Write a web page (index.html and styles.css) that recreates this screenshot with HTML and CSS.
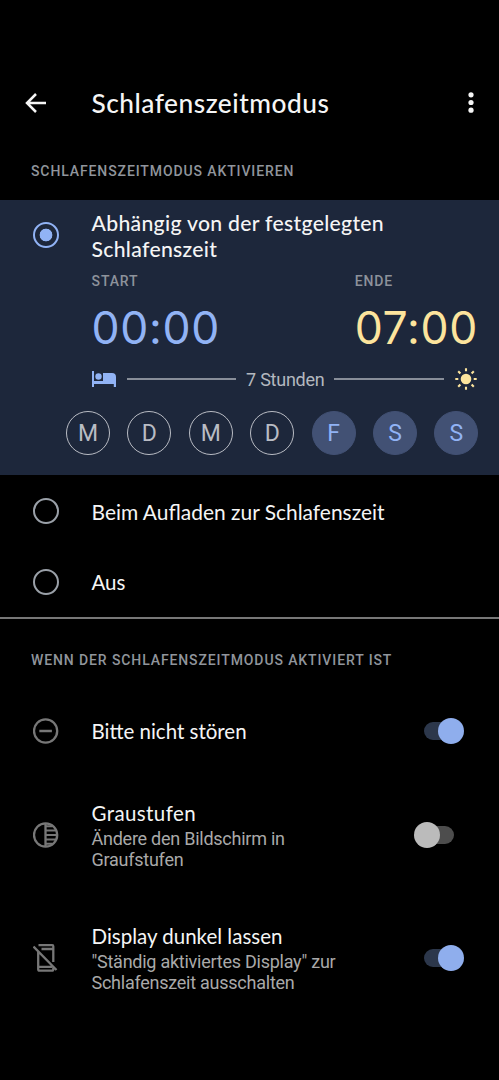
FILE: index.html
```html
<!DOCTYPE html>
<html lang="de">
<head>
<meta charset="utf-8">
<title>Schlafenszeitmodus</title>
<link rel="stylesheet" href="styles.css">
</head>
<body>
<header class="app-bar">
  <svg class="back" viewBox="0 0 22 20" width="22" height="20"><path d="M21 10H2.5M11 1L2 10l9 9" fill="none" stroke="currentColor" stroke-width="2.5"/></svg>
  <h1 class="app-title">Schlafenszeitmodus</h1>
  <svg class="more" viewBox="0 0 6 22" width="6" height="22" fill="currentColor"><circle cx="3" cy="2.800" r="2.600"/><circle cx="3" cy="10.500" r="2.600"/><circle cx="3" cy="18.200" r="2.600"/></svg>
</header>

<h2 class="section-label first">SCHLAFENSZEITMODUS AKTIVIEREN</h2>

<section class="schedule">
  <span class="radio checked"></span>
  <div class="schedule-body">
    <p class="label strong">Abhängig von der festgelegten<br>Schlafenszeit</p>
    <div class="times">
      <div><div class="caption">START</div><div class="time start">00:00</div></div>
      <div><div class="caption">ENDE</div><div class="time end">07:00</div></div>
    </div>
    <div class="duration">
      <svg class="bed" viewBox="0 0 24 16" width="24" height="16" fill="currentColor"><path d="M0 0h2v10h9V2h9a4 4 0 0 1 4 4v10h-2.200v-3H2v3H0z"/><circle cx="6.500" cy="5.500" r="3.200"/></svg>
      <span class="line"></span>
      <span class="hours">7 Stunden</span>
      <span class="line"></span>
      <svg class="sun" viewBox="-11 -11 22 22" width="22" height="22" stroke="currentColor" stroke-width="2.100"><circle r="5.300" fill="currentColor" stroke="none"/><path d="M0-10.700v3M0 10.700v-3M-10.700 0h3M10.700 0h-3M-7.800-7.800l2.200 2.200M7.800-7.800l-2.200 2.200M-7.800 7.800l2.200-2.200M7.800 7.800l-2.200-2.200"/></svg>
    </div>
  </div>
  <div class="days">
    <span class="day">M</span><span class="day">D</span><span class="day">M</span><span class="day">D</span><span class="day on">F</span><span class="day on">S</span><span class="day on">S</span>
  </div>
</section>

<div class="option"><span class="radio"></span><span class="label wide">Beim Aufladen zur Schlafenszeit</span></div>
<div class="option"><span class="radio"></span><span class="label">Aus</span></div>
<hr class="divider">

<h2 class="section-label second">WENN DER SCHLAFENSZEITMODUS AKTIVIERT IST</h2>

<div class="setting dnd">
  <svg class="icon" viewBox="0 0 26 26" width="26" height="26" fill="none" stroke="currentColor" stroke-width="2.300"><circle cx="12.600" cy="13" r="11.600"/><path d="M6.300 13h12.600" stroke-width="2.500"/></svg>
  <div class="text"><div class="label">Bitte nicht stören</div></div>
  <span class="switch on"></span>
</div>
<div class="setting gray">
  <svg class="icon" viewBox="0 0 26 26" width="26" height="26" fill="none" stroke="currentColor" stroke-width="2.300"><circle cx="12.600" cy="13" r="11.600"/><path d="M12.500 1.500v23"/><path d="M13 4.300h6.500M13 8.500h10M13 13h11M13 17.500h10M13 21.700h6.500" stroke-width="2"/></svg>
  <div class="text"><div class="label loose">Graustufen</div><div class="sub">Ändere den Bildschirm in<br>Graufstufen</div></div>
  <span class="switch"></span>
</div>
<div class="setting dark">
  <svg class="icon" viewBox="0 0 26 30" width="26" height="30" fill="none" stroke="currentColor" stroke-width="2.300"><path d="M5.500 2.200H19.200Q20.300 2.200 20.300 3.400V19M8.500 6H20M5.200 9V26.200Q5.200 27.600 6.600 27.600H18.900Q20.300 27.600 20.300 26.200V24.500M5.200 23.800H19M0.500 3.500L23.500 27"/></svg>
  <div class="text"><div class="label">Display dunkel lassen</div><div class="sub">"Ständig aktiviertes Display" zur<br>Schlafenszeit ausschalten</div></div>
  <span class="switch on"></span>
</div>
</body>
</html>
```
FILE: styles.css
```css
* { box-sizing: border-box; }
body {
  margin: 0;
  height: 1080px;
  background: #000;
  color: #f5f5f5;
  font-family: Roboto, sans-serif;
  overflow: hidden;
}
h1, h2, p { margin: 0; font-weight: 400; }
svg { display: block; flex: none; }

.app-bar {
  display: flex;
  align-items: center;
  height: 142px;
  padding: 63px 25px 0 25px;
}
.app-title {
  flex: 1;
  margin-left: 44.500px;
  padding-top: 0;
  font: 500 26.300px/32px Lato, sans-serif;
  letter-spacing: 0.5px;
  white-space: nowrap;
}
.section-label {
  padding-left: 31px;
  color: #90959c;
  font-size: 14px;
  font-weight: 500;
  line-height: 20px;
  letter-spacing: 0.890px;
  white-space: nowrap;
}
.first { padding-top: 19px; height: 58px; }
.second { padding-top: 31px; height: 77px; }

.schedule {
  display: grid;
  grid-template-columns: 91.500px 1fr;
  align-content: start;
  height: 275px;
  padding: 11px 21px 0 0;
  background: #1d273b;
}
.radio {
  flex: none;
  width: 26px;
  height: 26px;
  margin-left: 32.500px;
  border: 2.500px solid #9aa0a8;
  border-radius: 50%;
}
.schedule .radio { margin-top: 11px; }
.radio.checked {
  border-color: #91b3f5;
  background: radial-gradient(circle, #91b3f5 6px, transparent 6.700px);
}
.label {
  font: 400 20.500px/25.500px Lato, sans-serif;
  white-space: nowrap;
}
.strong {
  font-size: 21.200px;
  font-weight: 500;
  letter-spacing: 0.3px;
}
.wide { font-size: 20.950px; }
.loose { letter-spacing: 0.4px; }
.times { display: flex; justify-content: space-between; margin-top: 9px; }
.caption {
  color: #8d929b;
  font-size: 14px;
  font-weight: 500;
  line-height: 20px;
  letter-spacing: 0.9px;
}
.time {
  height: 54px;
  margin-top: 10px;
  font: 400 44.500px/54px Inter, sans-serif;
  letter-spacing: 0.7px;
}
.start { color: #91b3f5; }
.end { color: #fce49d; }
.duration {
  display: flex;
  align-items: center;
  height: 24px;
  margin-top: 12px;
}
.bed { color: #91b3f5; }
.sun { color: #fce49d; margin-right: 1px; }
.line { flex: 1; height: 2px; margin: 0 11px; background: #888e99; }
.bed + .line { margin-right: 10px; }
.hours + .line { margin-left: 10px; }
.hours { color: #b4b8bf; font-size: 18px; letter-spacing: -0.250px; }
.days {
  grid-column: 1 / -1;
  display: flex;
  justify-content: space-between;
  margin: 20px -0.500px 0 66px;
}
.day {
  width: 44px;
  height: 44px;
  border: 1.500px solid #b9bcc4;
  border-radius: 50%;
  color: #b9bcc4;
  font-size: 23px;
  line-height: 43px;
  text-align: center;
}
.day.on { border-color: #425174; background: #425174; color: #91b3f5; }

.option { display: flex; align-items: center; height: 71px; }
.option .label { margin-left: 33px; padding-top: 2px; }
.divider { height: 2px; margin: 0; border: 0; background: #777; }

.setting { display: flex; align-items: center; padding: 0 35px 0 33px; }
.icon { color: #777; }
.text { flex: 1; margin-left: 32.500px; }
.dnd { height: 70px; }
.dnd .text { padding-top: 2px; }
.gray { height: 138px; }
.gray .label, .dark .label { margin: -1px 0 1px; }
.gray .text { padding-top: 2px; }
.dark { height: 107px; }
.dark .text { padding-top: 3px; }
.sub {
  color: #a9a9a9;
  font-size: 18px;
  line-height: 21px;
  letter-spacing: -0.250px;
  white-space: nowrap;
}
.switch {
  display: flex;
  align-items: center;
  width: 35px;
  height: 18px;
  margin-right: 10px;
  border-radius: 9px;
  background: #4d4d4d;
}
.switch::before {
  content: "";
  flex: none;
  width: 26px;
  height: 26px;
  margin-left: -5px;
  border-radius: 50%;
  background: #bbb;
}
.switch.on { margin-right: 5px; background: #2c374b; }
.switch.on::before { margin-left: 14px; background: #8faeed; }
```
